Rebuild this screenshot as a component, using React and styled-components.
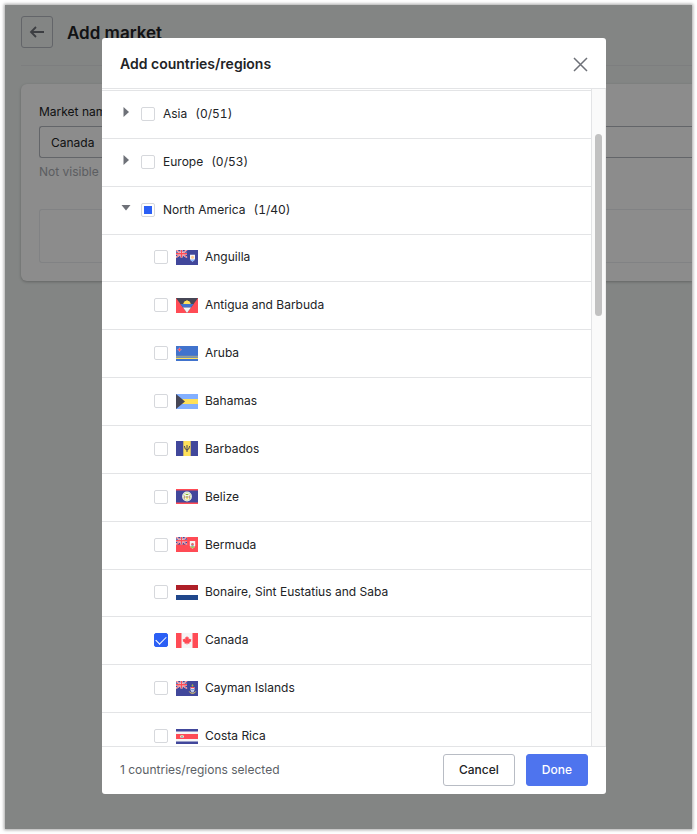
import { useEffect, useRef, useState } from 'react';
import styled, { createGlobalStyle } from 'styled-components';

const GlobalStyle = createGlobalStyle`
  * {
    box-sizing: border-box;
  }
  body {
    margin: 0;
    background: #fff;
    color: #222326;
    font-family: Inter, 'Liberation Sans', sans-serif;
    font-size: 12px;
    line-height: 20px;
  }
  button, input {
    font: inherit;
    color: inherit;
  }
`;

const BLUE = '#41479b';
const RED = '#ff4b55';
const WHITE = '#f5f5f5';
const YELLOW = '#ffe15a';

const UnionJack = () => (
  <g>
    <path d="M0 0h11v7.500H0z" fill={BLUE} />
    <path d="M0 0l11 7.500M11 0L0 7.500" stroke={WHITE} strokeWidth="1.500" />
    <path d="M0 0l11 7.500M11 0L0 7.500" stroke={RED} strokeWidth="0.800" />
    <path d="M5.500 0v7.500M0 3.750h11" stroke={WHITE} strokeWidth="2.200" />
    <path d="M5.500 0v7.500M0 3.750h11" stroke={RED} strokeWidth="1.400" />
  </g>
);

const flags = {
  anguilla: (
    <>
      <path d="M0 0h22v15H0z" fill={BLUE} />
      <UnionJack />
      <path d="M14 4.800h5v3.700q0 2-2.500 3.200q-2.500-1.200-2.500-3.200z" fill={WHITE} />
      <path d="M14.300 9.400h4.400q-.6 1.400-2.200 2.200q-1.600-.8-2.200-2.200z" fill="#82afff" />
      <circle cx="16.500" cy="7.300" r="1.500" fill="#ffc88c" />
    </>
  ),
  antigua: (
    <>
      <path d="M0 0h22v15H0z" fill={RED} />
      <path d="M0 0h22L11 15z" fill="#464655" />
      <path d="M4.400 6h13.200l-2.600 3.600H7z" fill="#4173cd" />
      <path d="M7 9.500h8L11 15z" fill={WHITE} />
      <path d="M7.200 6l.6-1.600l.5-.3l.4-1.200l1.200.2L11 2l1.100 1.100l1.200-.2l.4 1.200l.5.300l.6 1.600z" fill={YELLOW} />
    </>
  ),
  aruba: (
    <>
      <path d="M0 0h22v15H0z" fill="#4173cd" />
      <path d="M0 9.800h22v1H0z" fill="#a8a98f" />
      <path d="M0 11.700h22v1.300H0z" fill={YELLOW} />
      <path d="M3.500 1.500l.7 1.500l1.500.7l-1.500.7l-.7 1.500l-.7-1.500l-1.500-.7l1.500-.7z" fill={RED} stroke={WHITE} strokeWidth="0.200" />
    </>
  ),
  bahamas: (
    <>
      <path d="M0 0h22v15H0z" fill="#82afff" />
      <path d="M0 5h22v5H0z" fill={YELLOW} />
      <path d="M0 0l9 7.500L0 15z" fill="#464655" />
    </>
  ),
  barbados: (
    <>
      <path d="M0 0h22v15H0z" fill={BLUE} />
      <path d="M7.300 0h7.400v15H7.300z" fill={YELLOW} />
      <path d="M11 4v7M8.500 5.200q.2 3.600 2.500 3.800q2.300-.2 2.500-3.800M8.200 5.500l.7.100M13.100 5.600l.7-.1" fill="none" stroke="#464655" strokeWidth="1" />
    </>
  ),
  belize: (
    <>
      <path d="M0 0h22v15H0z" fill={BLUE} />
      <path d="M0 0h22v1.500H0zM0 13.500h22V15H0z" fill={RED} />
      <circle cx="11" cy="7.500" r="4.900" fill={WHITE} />
      <circle cx="11" cy="7.500" r="3.900" fill="none" stroke="#a9cf6a" strokeWidth="0.500" />
      <path d="M9.500 7h3v1.500q0 1.200-1.500 2q-1.500-.8-1.500-2z" fill={YELLOW} />
      <path d="M9.200 6q1.800-1.800 3.600 0z" fill="#73af00" />
      <path d="M8.500 6.500v3.200M13.500 6.500v3.200" stroke="#a05a46" strokeWidth="0.600" />
      <path d="M9.700 8h2.600" stroke="#4173cd" strokeWidth="0.700" />
    </>
  ),
  bermuda: (
    <>
      <path d="M0 0h22v15H0z" fill={RED} />
      <UnionJack />
      <path d="M13.800 4h5.400v4.500q0 2-2.700 3.300q-2.700-1.300-2.700-3.300z" fill={WHITE} />
      <path d="M14 9.300h5q-.5 1.300-2.500 2.300q-2-1-2.500-2.300z" fill="#9dc456" />
      <circle cx="16.500" cy="7.300" r="1.300" fill="#e0696a" />
      <path d="M15.500 8.800h2" stroke="#4173cd" strokeWidth="0.700" />
    </>
  ),
  bonaire: (
    <>
      <path d="M0 0h22v5H0z" fill="#ae1f28" />
      <path d="M0 5h22v5H0z" fill="#fff" />
      <path d="M0 10h22v5H0z" fill="#20478b" />
    </>
  ),
  canada: (
    <>
      <path d="M0 0h22v15H0z" fill={WHITE} />
      <path d="M0 0h5.500v15H0zM16.500 0H22v15h-5.500z" fill={RED} />
      <path d="M11 3l.9 1.600l1-.4l-.3 2.200l1.200-1l.3.800l1.300-.2l-.5 1.600l.6.400l-2.300 1.800l.2.900l-2.200-.3V12h-.4v-1.600l-2.200.3l.2-.9L6.500 8l.6-.4L6.600 6l1.300.2l.3-.8l1.200 1l-.3-2.200l1 .4z" fill={RED} />
    </>
  ),
  cayman: (
    <>
      <path d="M0 0h22v15H0z" fill={BLUE} />
      <UnionJack />
      <path d="M14.600 6h3.800v3q0 1.700-1.900 2.500q-1.900-.8-1.900-2.500z" fill={WHITE} />
      <path d="M14.600 6h3.800v1.200h-3.800z" fill={RED} />
      <path d="M15 8.500h3M15.300 10h2.400" stroke="#4173cd" strokeWidth="0.700" />
      <path d="M16.500 3l1 1.200l-.4 1.400h-1.200l-.4-1.400z" fill="#a3b04a" />
      <path d="M13.300 10.500q.6 1.700 3.200 1.900q2.600-.2 3.200-1.900" fill="none" stroke={YELLOW} strokeWidth="0.900" />
    </>
  ),
  costaRica: (
    <>
      <path d="M0 0h22v15H0z" fill={WHITE} />
      <path d="M0 0h22v2.500H0zM0 12.500h22V15H0z" fill={BLUE} />
      <path d="M0 5h22v5H0z" fill={RED} />
      <ellipse cx="6" cy="7.500" rx="1.900" ry="1.600" fill={WHITE} />
      <path d="M4.600 7.700h2.800q-.4 1.100-1.400 1.100t-1.400-1.100z" fill="#6f9bd8" />
      <path d="M4.900 7.400L6 6.300l1.100 1.100z" fill="#73af00" />
    </>
  ),
};

const regions = [
  { name: 'Asia', total: 51 },
  { name: 'Europe', total: 53 },
  { name: 'North America', total: 40, open: true },
];

const countries = [
  { flag: 'anguilla', name: 'Anguilla' },
  { flag: 'antigua', name: 'Antigua and Barbuda' },
  { flag: 'aruba', name: 'Aruba' },
  { flag: 'bahamas', name: 'Bahamas' },
  { flag: 'barbados', name: 'Barbados' },
  { flag: 'belize', name: 'Belize' },
  { flag: 'bermuda', name: 'Bermuda' },
  { flag: 'bonaire', name: 'Bonaire, Sint Eustatius and Saba' },
  { flag: 'canada', name: 'Canada' },
  { flag: 'cayman', name: 'Cayman Islands' },
  { flag: 'costaRica', name: 'Costa Rica' },
];

const RegionRow = ({ name, total, open, count }) => {
  const box = useRef(null);

  useEffect(() => {
    box.current.indeterminate = count > 0 && count < total;
  }, [count, total]);

  return (
    <Row>
      <Toggle type="button" aria-label={`Toggle ${name}`} aria-expanded={!!open}>
        <Caret viewBox="0 0 10 10">
          <path d={open ? 'M0.500 2h9L5 7.500z' : 'M2.500 0l5.500 5l-5.500 5z'} />
        </Caret>
      </Toggle>
      <RowLabel>
        <Checkbox ref={box} />
        <RegionName>{name}</RegionName>
        <Count>({count}/{total})</Count>
      </RowLabel>
    </Row>
  );
};

const App = () => {
  const [selected, setSelected] = useState(['Canada']);

  const toggle = (name) =>
    setSelected((list) =>
      list.includes(name) ? list.filter((item) => item !== name) : [...list, name]
    );

  return (
    <>
      <GlobalStyle />
      <Frame>
        <Page>
          <PageHeader>
            <BackButton type="button" aria-label="Back">
              <svg width="16" height="14" viewBox="0 0 16 14" fill="none" stroke="#6e7178" strokeWidth="1.800">
                <path d="M15 7H2M7 2L2 7L7 12" />
              </svg>
            </BackButton>
            <PageTitle>Add market</PageTitle>
          </PageHeader>
          <Card>
            <FieldLabel htmlFor="market-name">Market name</FieldLabel>
            <TextInput id="market-name" defaultValue="Canada" />
            <Hint>Not visible</Hint>
            <EmptyBox />
          </Card>
        </Page>

        <Overlay>
          <Modal role="dialog" aria-labelledby="modal-title">
            <ModalHeader>
              <ModalTitle id="modal-title">Add countries/regions</ModalTitle>
              <CloseButton type="button" aria-label="Close">
                <svg width="15" height="15" viewBox="0 0 15 15" fill="none" stroke="#6e7178" strokeWidth="1.500">
                  <path d="M1 1l13 13M14 1L1 14" />
                </svg>
              </CloseButton>
            </ModalHeader>

            <ModalBody>
              <Scroller>
                <List>
                  {regions.map((region) => (
                    <RegionRow key={region.name} {...region} count={region.open ? selected.length : 0} />
                  ))}
                  {countries.map(({ flag, name }) => (
                    <Row key={name} $nested>
                      <RowLabel>
                        <Checkbox checked={selected.includes(name)} onChange={() => toggle(name)} />
                        <Flag viewBox="0 0 22 15">{flags[flag]}</Flag>
                        <span>{name}</span>
                      </RowLabel>
                    </Row>
                  ))}
                </List>
              </Scroller>
              <Track>
                <Thumb />
              </Track>
            </ModalBody>

            <ModalFooter>
              <Summary>{selected.length} countries/regions selected</Summary>
              <Button type="button">Cancel</Button>
              <Button type="button" $primary>Done</Button>
            </ModalFooter>
          </Modal>
        </Overlay>
      </Frame>
    </>
  );
};

const Frame = styled.div`
  position: relative;
  min-height: calc(100vh - 10px);
  margin: 5px;
  overflow: hidden;
  background: #eef2f0;
  box-shadow: 0 0 3px 1px rgba(0, 0, 0, 0.35);
`;

const Page = styled.main`
  padding: 0 0 0 16px;
`;

const PageHeader = styled.header`
  display: flex;
  align-items: center;
  gap: 14px;
  height: 61px;
  padding-bottom: 6px;
  border-bottom: 1px solid #e3e6e8;
`;

const BackButton = styled.button`
  display: grid;
  place-items: center;
  width: 32px;
  height: 32px;
  padding: 0;
  border: 1px solid #b4b8bf;
  border-radius: 3px;
  background: transparent;
`;

const PageTitle = styled.h1`
  margin: 0;
  padding-top: 2px;
  font-size: 17px;
  font-weight: 600;
  line-height: 24px;
`;

const Card = styled.section`
  display: flex;
  flex-direction: column;
  margin-top: 18px;
  padding: 18px 0 18px 18px;
  border-radius: 6px 0 0 6px;
  background: #fff;
  box-shadow: 0 1px 3px rgba(0, 0, 0, 0.25);
`;

const FieldLabel = styled.label`
  margin-bottom: 4px;
`;

const TextInput = styled.input`
  width: 100%;
  height: 32px;
  padding: 0 11px;
  border: 1px solid #b4b8bf;
  border-right: 0;
  border-radius: 3px 0 0 3px;
  background: #fff;
`;

const Hint = styled.p`
  margin: 4px 0 27px;
  color: #a8abb1;
`;

const EmptyBox = styled.div`
  height: 54px;
  border: 1px solid #ebedf0;
  border-right: 0;
  border-radius: 3px 0 0 3px;
`;

const Overlay = styled.div`
  position: absolute;
  inset: 0;
  display: flex;
  justify-content: center;
  align-items: flex-start;
  padding: 33px 86px 35px 97px;
  background: rgba(0, 0, 0, 0.45);
`;

const Modal = styled.div`
  display: flex;
  flex-direction: column;
  width: 100%;
  max-width: 600px;
  height: 100%;
  border-radius: 3px;
  background: #fff;
  overflow: hidden;
`;

const ModalHeader = styled.header`
  display: flex;
  align-items: center;
  justify-content: space-between;
  flex: none;
  height: 51px;
  padding: 2px 18px 0;
  border-bottom: 1px solid #e3e4e6;
`;

const ModalTitle = styled.h2`
  margin: 0;
  font-size: 14px;
  font-weight: 600;
  line-height: 20px;
`;

const CloseButton = styled.button`
  display: grid;
  padding: 0;
  border: 0;
  background: none;
`;

const ModalBody = styled.div`
  display: flex;
  flex: 1;
  min-height: 0;
`;

const Scroller = styled.div`
  flex: 1;
  padding-top: 1px;
  overflow-y: auto;
  scrollbar-width: none;
`;

const List = styled.ul`
  display: grid;
  grid-auto-rows: 1fr;
  height: 670px;
  margin: 0;
  padding: 0;
  list-style: none;
`;

const Row = styled.li`
  display: flex;
  align-items: center;
  border-top: 1px solid #e3e4e6;
  padding: ${({ $nested }) => ($nested ? '0 0 1px 52px' : '0 0 0 19px')};
`;

const Toggle = styled.button`
  display: grid;
  width: 20px;
  height: 20px;
  padding: 3px 0 0;
  border: 0;
  background: none;
`;

const Caret = styled.svg`
  width: 10px;
  height: 10px;
  fill: #6e7178;
`;

const RowLabel = styled.label`
  display: flex;
  align-items: center;
`;

const Checkbox = styled.input.attrs({ type: 'checkbox' })`
  appearance: none;
  display: grid;
  place-content: center;
  flex: none;
  width: 14px;
  height: 14px;
  margin: 0 8px 0 0;
  border: 1px solid #d6d8dc;
  border-radius: 2px;
  background: #fff;

  &:checked {
    border-color: #2b5ff5;
    background: #2b5ff5;
  }
  &:checked::after {
    content: '';
    width: 9px;
    height: 5px;
    margin-bottom: 2px;
    border: solid #fff;
    border-width: 0 0 1px 1px;
    transform: rotate(-45deg);
  }
  &:indeterminate::after {
    content: '';
    width: 8px;
    height: 8px;
    background: #2b5ff5;
  }
`;

const RegionName = styled.span`
  margin-right: 8px;
`;

const Count = styled.span`
  font-variant-numeric: tabular-nums;
`;

const Flag = styled.svg`
  width: 22px;
  height: 15px;
  margin-right: 7px;
`;

const Track = styled.div`
  flex: none;
  width: 15px;
  padding: 45px 3px 0;
  border-left: 1px solid #e3e4e6;
  border-right: 1px solid #ececec;
  background: #fafafa;
`;

const Thumb = styled.div`
  height: 182px;
  border-radius: 4px;
  background: #c1c1c1;
`;

const ModalFooter = styled.footer`
  display: flex;
  align-items: center;
  flex: none;
  gap: 11px;
  padding: 7px 18px 8px;
  border-top: 1px solid #e3e4e6;
`;

const Summary = styled.span`
  flex: 1;
  color: #5c5f66;
`;

const Button = styled.button`
  height: 32px;
  padding: 0 15px;
  border: 1px solid ${({ $primary }) => ($primary ? '#4e74ee' : '#b8bcc4')};
  border-radius: 3px;
  background: ${({ $primary }) => ($primary ? '#4e74ee' : '#fff')};
  color: ${({ $primary }) => ($primary ? '#fff' : '#222326')};
  font-weight: 500;
`;

export default App;
